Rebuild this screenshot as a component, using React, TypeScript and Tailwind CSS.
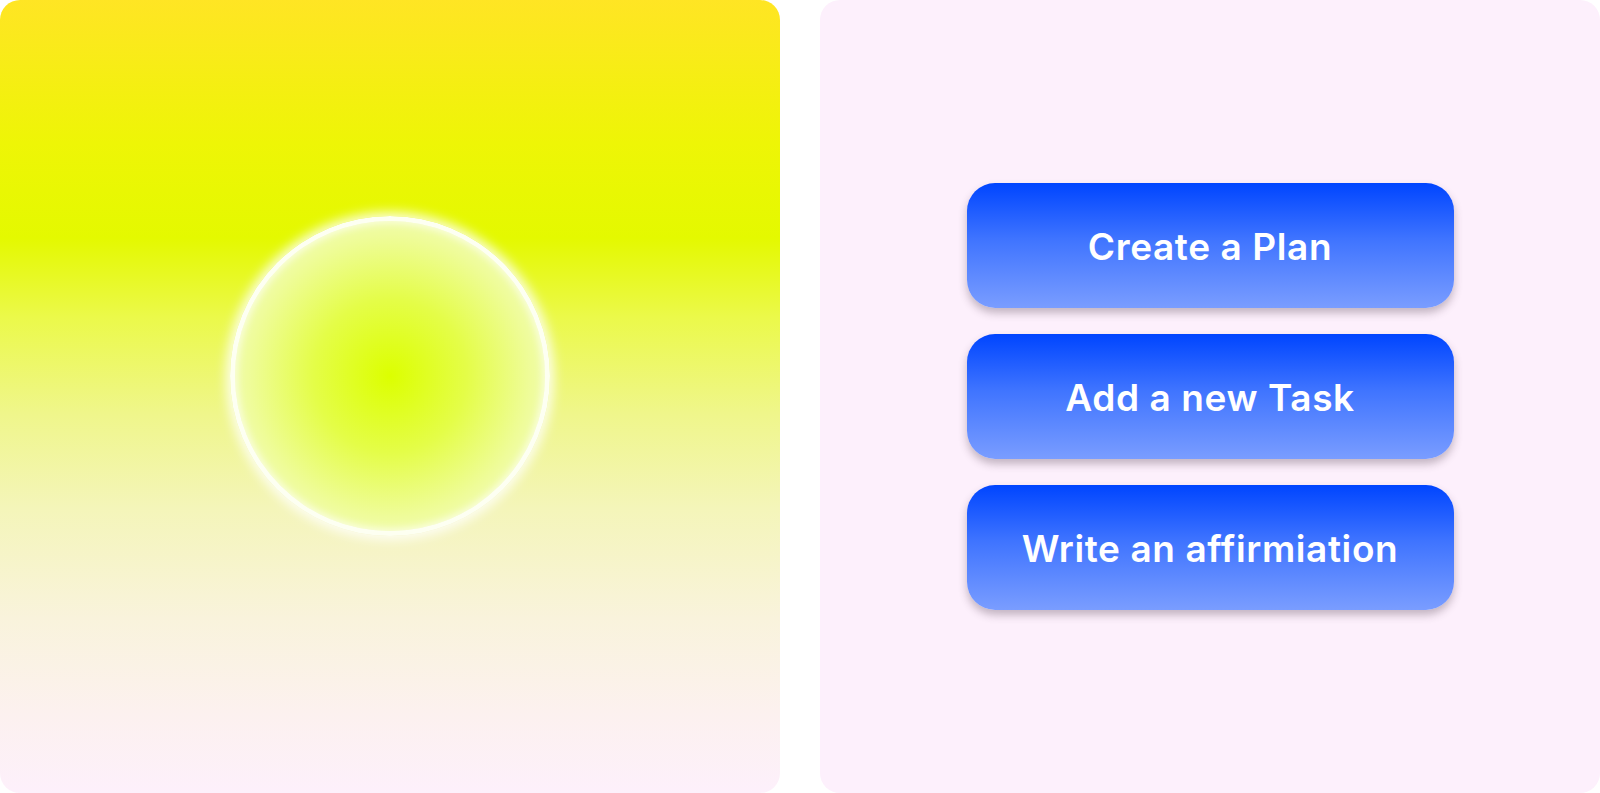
export default function App() {
  const actions = ['Create a Plan', 'Add a new Task', 'Write an affirmiation'];

  return (
    <div className="flex h-[793px] w-[1600px] gap-10 bg-white" style={{ fontFamily: 'Inter, "Noto Sans", sans-serif' }}>
      {/* Left: glowing orb */}
      <div className="flex h-full w-[780px] items-center justify-center rounded-[20px] bg-[linear-gradient(180deg,#ffe524_0%,#eef506_18%,#e4f900_30%,#ebf94a_40%,#eff68a_52%,#f4f5b9_64%,#f9f3dc_78%,#fcf1ef_90%,#fdf0fb_100%)]">
        <div className="mb-[42px] h-[320px] w-[320px] rounded-full border-[5px] border-white/85 bg-[radial-gradient(circle,#dcff00_0%,#e4fd48_35%,#effc9c_65%,#f6fdd0_100%)] shadow-[0_0_12px_4px_rgba(255,255,255,0.85),inset_0_0_8px_2px_rgba(255,255,255,0.7)]" />
      </div>

      {/* Right: action buttons */}
      <div className="flex h-full w-[780px] flex-col items-center justify-center gap-[26px] rounded-[20px] bg-[#fdf0fc]">
        {actions.map((label) => (
          <button
            key={label}
            className="flex h-[125px] w-[487px] items-center justify-center rounded-[28px] bg-[linear-gradient(180deg,#0045ff_0%,#3f74ff_45%,#7a9dff_100%)] pt-[3px] text-[37px] font-semibold tracking-[0.6px] text-white shadow-[0_5px_9px_rgba(60,40,60,0.3)]"
          >
            {label}
          </button>
        ))}
      </div>
    </div>
  );
}
